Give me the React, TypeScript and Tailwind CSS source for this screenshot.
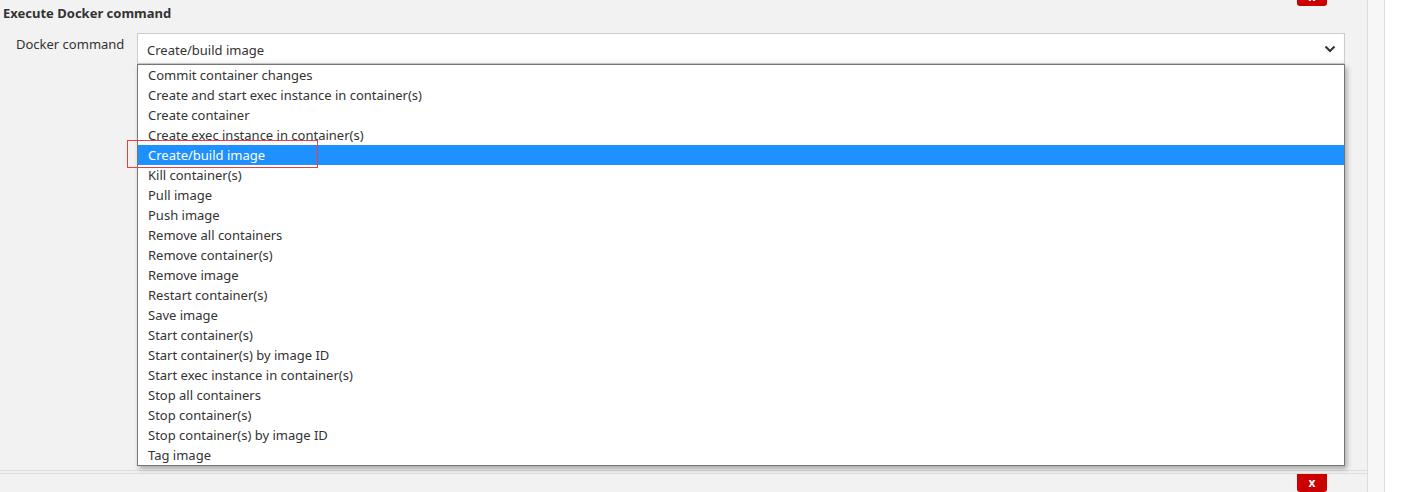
import React from "react";

const items = [
  "Commit container changes",
  "Create and start exec instance in container(s)",
  "Create container",
  "Create exec instance in container(s)",
  "Create/build image",
  "Kill container(s)",
  "Pull image",
  "Push image",
  "Remove all containers",
  "Remove container(s)",
  "Remove image",
  "Restart container(s)",
  "Save image",
  "Start container(s)",
  "Start container(s) by image ID",
  "Start exec instance in container(s)",
  "Stop all containers",
  "Stop container(s)",
  "Stop container(s) by image ID",
  "Tag image",
];

const font = { fontFamily: '"Segoe UI", "Noto Sans", "Open Sans", sans-serif' };

export default function App() {
  return (
    <div
      className="w-[1406px] h-[492px] flex bg-white overflow-hidden text-[#333] text-[13px]"
      style={font}
    >
      <div className="w-[1368px] h-full flex flex-col bg-[#f2f2f2] border-r border-[#dcdcdc]">
        {/* Panel 1 */}
        <div className="relative h-[471px] border-b border-[#dcdcdc] shrink-0">
          <div className="absolute right-[40px] top-[-12px] w-[30px] h-[18px] bg-[#cc0000] rounded-[3px] text-white font-bold text-[12px] flex items-center justify-center">
            x
          </div>
          <div className="pl-[3px] pt-[4px] h-[33px] font-bold leading-[18px]">Execute Docker command</div>
          <div className="flex">
            <div className="w-[137px] pl-[16px] pt-[2px] leading-[18px]">Docker command</div>
            <div className="relative w-[1208px]">
              <div className="h-[31px] bg-white border border-[#ccc] flex items-center justify-between pl-[9px] pr-[8px] pt-[5px] shadow-[inset_0_-2px_3px_rgba(0,0,0,0.04)]">
                <span>Create/build image</span>
                <svg width="12" height="8" viewBox="0 0 12 8" className="mb-[4px]">
                  <path d="M1.5 1.5 L6 6 L10.5 1.5" stroke="#333" strokeWidth="2" fill="none" />
                </svg>
              </div>
              <div className="absolute left-0 top-[31px] w-[1208px] bg-white border border-[#767676] shadow-[2px_3px_5px_rgba(0,0,0,0.3)] z-10">
                {items.map((t) => (
                  <div
                    key={t}
                    className={
                      "h-[20px] leading-[20px] pl-[10px] " +
                      (t === "Create/build image" ? "bg-[#1e90ff] text-white" : "text-[#333]")
                    }
                  >
                    {t}
                  </div>
                ))}
              </div>
              <div className="absolute left-[-10px] top-[107px] w-[191px] h-[28px] border border-[#f03c3c] z-20" />
            </div>
          </div>
        </div>
        {/* Panel 2 */}
        <div className="relative mt-[2px] flex-1 border-t border-[#dcdcdc]">
          <div className="absolute right-[40px] top-0 w-[30px] h-[18px] bg-[#cc0000] rounded-b-[3px] text-white font-bold text-[12px] flex items-center justify-center">
            x
          </div>
        </div>
      </div>
      <div className="w-[17px] h-full bg-[#f7f7f7] border-r border-[#dcdcdc]" />
      <div className="flex-1 bg-white" />
    </div>
  );
}
